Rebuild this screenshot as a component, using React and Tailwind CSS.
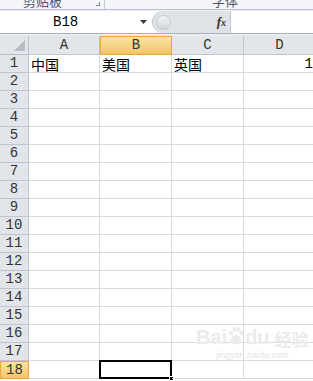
import { Fragment } from "react";

const cols = ["A", "B", "C", "D"];
const rows = Array.from({ length: 18 }, (_, i) => i + 1);

const data = {
  1: { A: "中国", B: "美国", C: "英国", D: "1" },
};

const mono = "font-['Liberation_Mono','DejaVu_Sans_Mono',monospace]";
const cjk = "font-['Noto_Sans_CJK_SC',sans-serif]";

const App = () => {
  return (
    <div className="relative w-[313px] h-[381px] overflow-hidden bg-white">
      {/* ribbon bottom, cut off */}
      <div className="h-[10px] bg-[#f3f5f8] flex overflow-hidden border-b border-[#b9bfc8]">
        <div className="w-[105px] flex border-r border-[#c9ced6]">
          <span className={`${cjk} text-[13px] leading-none text-[#4c5566] ml-[23px] -mt-[6px]`}>
            剪贴板
          </span>
          <span className="ml-auto mr-[4px] w-[4px] h-[4px] mt-[2px] border-r border-b border-[#7b8594]" />
        </div>
        <div className="flex-1 flex">
          <span className={`${cjk} text-[13px] leading-none text-[#4c5566] -mt-[6px] ml-[107px]`}>
            字体
          </span>
        </div>
      </div>
      <div className="h-[1px] bg-[#eef0f3]" />

      {/* formula bar */}
      <div className="h-[23px] flex border-b border-[#aab1bb] bg-white">
        <div className="w-[152px] flex items-center">
          <span className={`${mono} text-[14px] text-black ml-[53px]`}>B18</span>
          <svg width="7" height="4" viewBox="0 0 7 4" className="ml-auto mr-[5px]">
            <path d="M0 0h7L3.5 4z" fill="#3b3b3b" />
          </svg>
        </div>
        <div className="w-[79px] flex items-center bg-[#dfe2e7] rounded-l-full border-r border-[#a9b0ba] border-l border-[#c2c8cf]">
          <div className="w-[15px] h-[15px] ml-[3px] rounded-full bg-gradient-to-b from-[#f3f4f6] to-[#d0d4da] border border-[#c4c9d0]" />
          <span className="ml-auto mr-[4px] font-['Liberation_Serif',serif] italic font-bold text-[13px] text-[#333]">
            f<span className="text-[10px]">x</span>
          </span>
        </div>
        <div className="flex-1 bg-white" />
      </div>
      <div className="h-[2px] bg-[#e9ecf0]" />

      {/* grid */}
      <div className="grid grid-cols-[29px_71px_72px_72px_72px] w-[316px]">
        {/* header row */}
        <div className="h-[19px] bg-[#e2e6eb] border-r border-b border-[#b7bec8] flex items-end justify-end pr-[3px] pb-[3px]">
          <svg width="11" height="11" viewBox="0 0 11 11">
            <path d="M11 0V11H0z" fill="#b7bcc3" />
          </svg>
        </div>
        {cols.map((c) => (
          <div
            key={c}
            className={`h-[19px] flex items-center justify-center ${mono} text-[14px] ${
              c === "B"
                ? "bg-gradient-to-b from-[#fbe3a8] to-[#f2c562] border border-[#eea33c] text-[#333]"
                : "bg-[#e2e6eb] border-r border-b border-[#bec5ce] text-[#333]"
            }`}
          >
            {c}
          </div>
        ))}

        {rows.map((r) => (
          <Fragment key={r}>
            <div
              className={`h-[18px] flex items-center justify-center ${mono} text-[14px] text-[#333] ${
                r === 18
                  ? "bg-gradient-to-b from-[#fbe3a8] to-[#f2c562] border border-[#eea33c]"
                  : "bg-[#e2e6eb] border-r border-b border-[#bec5ce]"
              }`}
            >
              {r}
            </div>
            {cols.map((c) => {
              const v = data[r] && data[r][c];
              const sel = r === 18 && c === "B";
              return (
                <div
                  key={c}
                  className={`relative h-[18px] border-r border-b border-[#dadada] flex items-center ${
                    c === "D" ? "justify-end pr-[2px]" : "pl-[2px]"
                  }`}
                >
                  {v && (
                    <span className={`${c === "D" ? mono : cjk} text-[14px] leading-none text-black`}>
                      {v}
                    </span>
                  )}
                  {sel && (
                    <>
                      <div className="absolute -left-[1px] -top-[1px] -right-[1px] -bottom-[1px] border-2 border-black" />
                      <div className="absolute -right-[3px] -bottom-[3px] w-[5px] h-[5px] bg-black border border-white" />
                    </>
                  )}
                </div>
              );
            })}
          </Fragment>
        ))}
      </div>

      {/* watermark */}
      <div className="absolute left-[196px] top-[327px] flex flex-col items-center pointer-events-none">
        <div className="flex items-end gap-[1px] font-['Liberation_Sans',sans-serif] font-bold text-[20px] leading-none text-[#ebebeb]">
          <span>Bai</span>
          <svg width="16" height="18" viewBox="0 0 16 18" className="mb-[2px]">
            <g fill="#ebebeb">
              <ellipse cx="3" cy="6" rx="2" ry="2.5" />
              <ellipse cx="6.5" cy="2.5" rx="2" ry="2.5" />
              <ellipse cx="10.5" cy="2.5" rx="2" ry="2.5" />
              <ellipse cx="13.5" cy="6" rx="2" ry="2.5" />
              <path d="M8 8c3 0 6 4 5 7s-3 2-5 2-4 1-5-2 2-7 5-7z" />
            </g>
          </svg>
          <span>du</span>
          <span className={`${cjk} text-[17px] ml-[4px]`}>经验</span>
        </div>
        <span className="font-['Liberation_Sans',sans-serif] text-[9px] leading-none mt-[4px] text-[#e3e3e3]">
          jingyan.baidu.com
        </span>
      </div>
    </div>
  );
};

export default App;
